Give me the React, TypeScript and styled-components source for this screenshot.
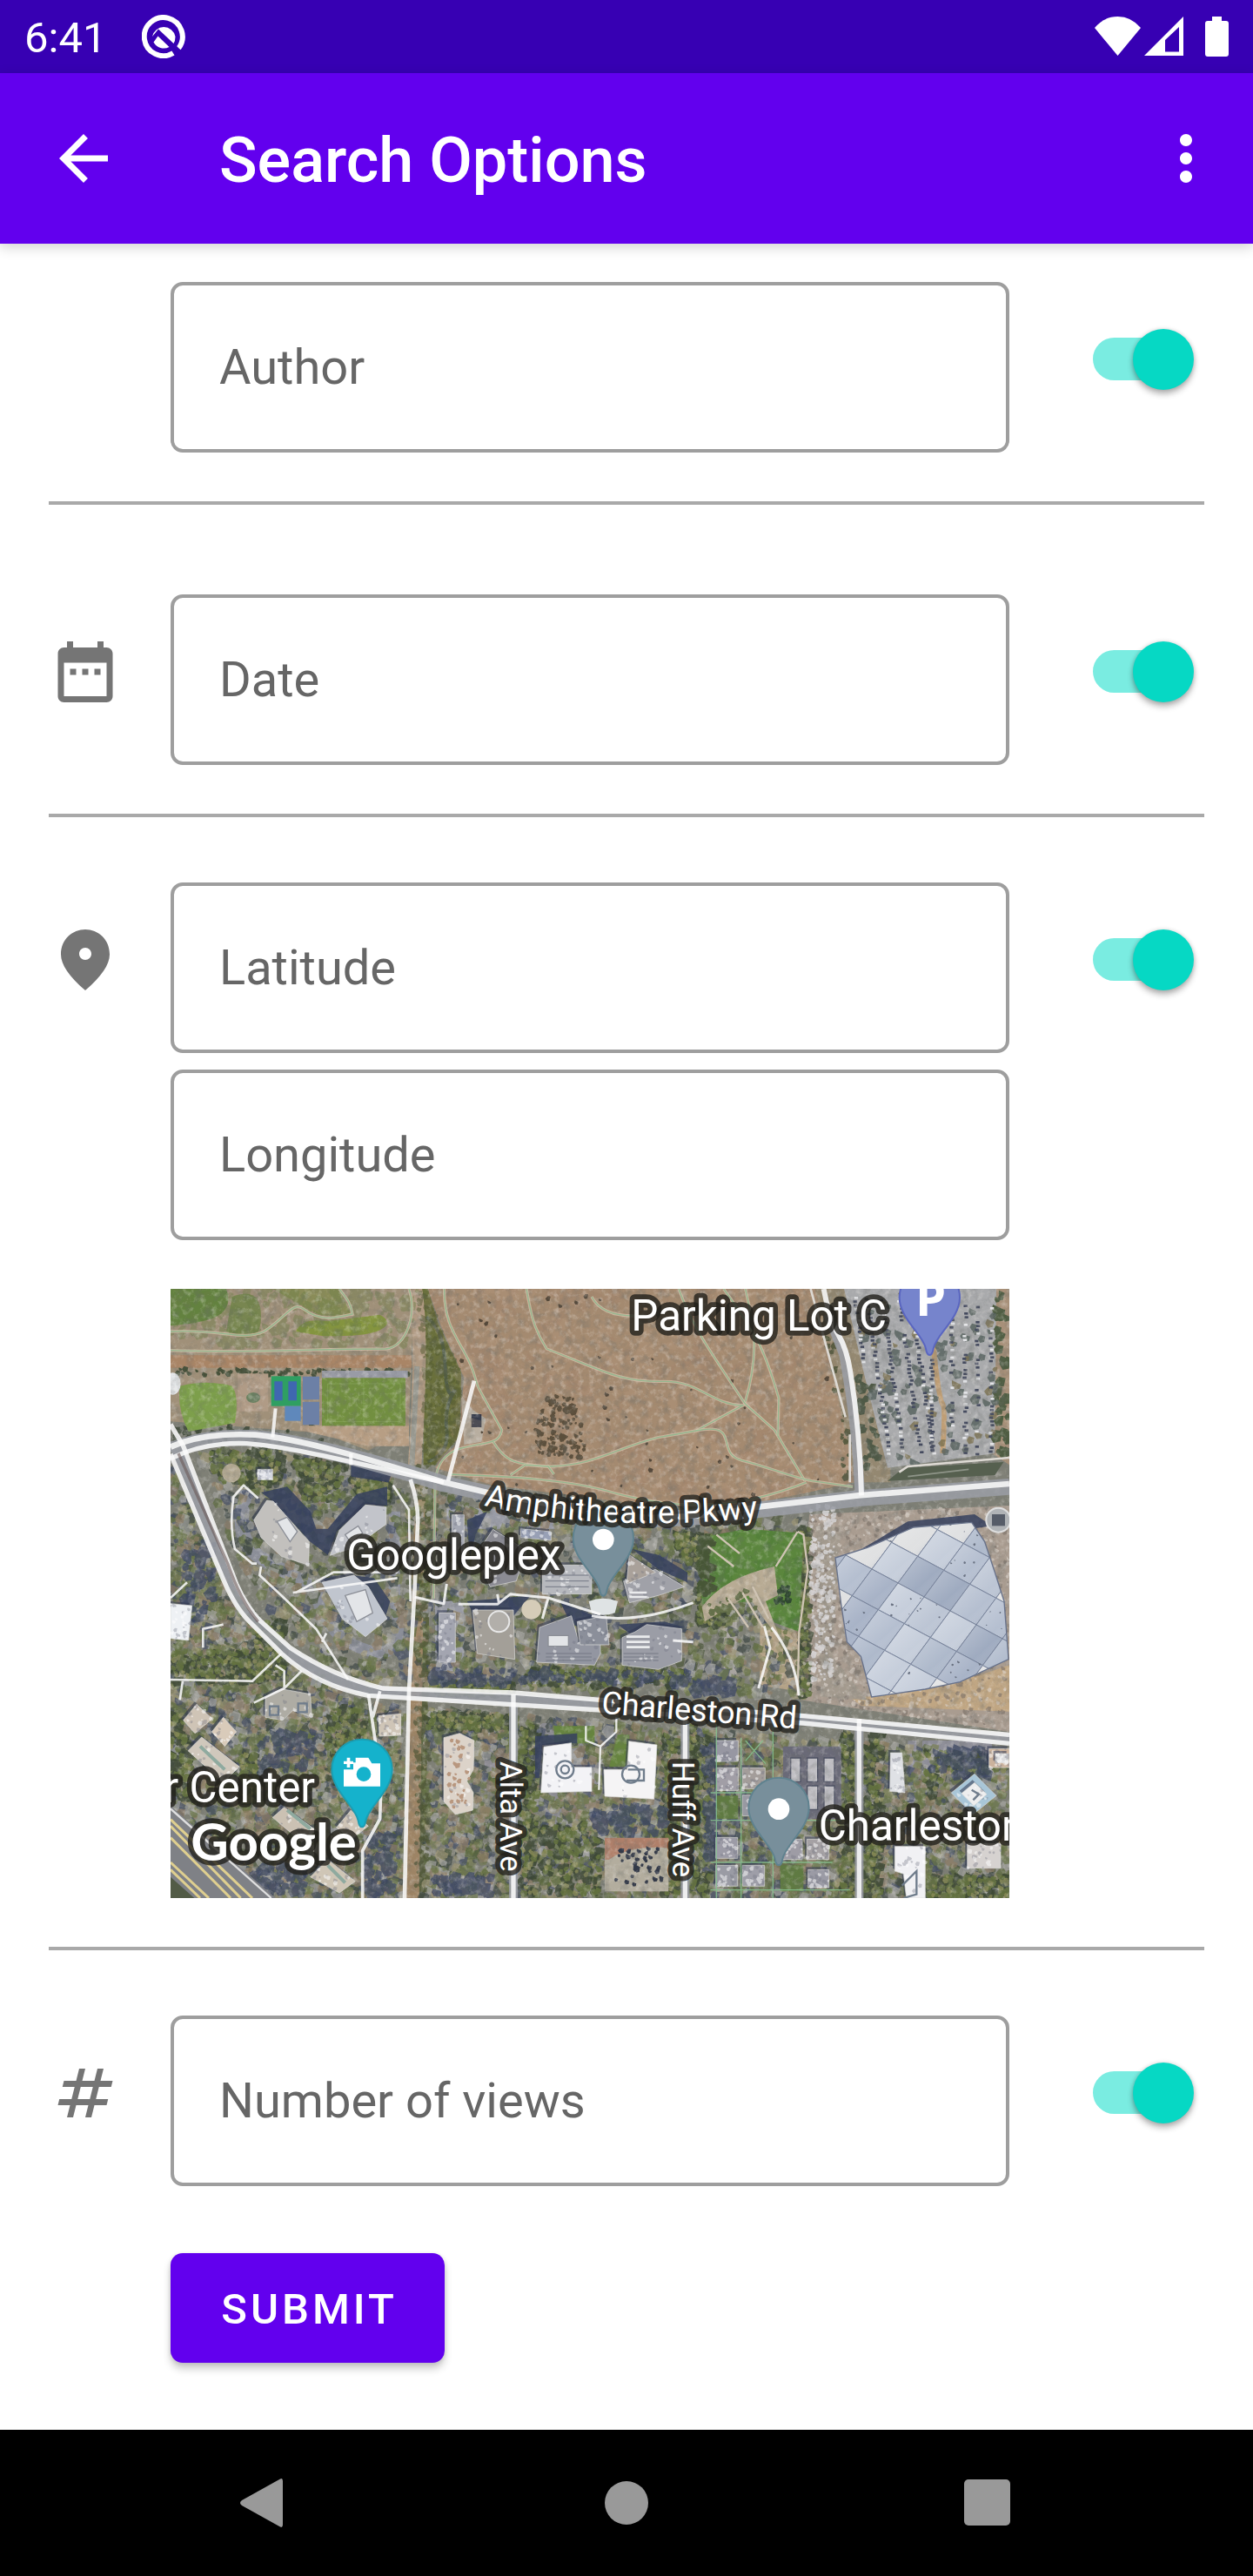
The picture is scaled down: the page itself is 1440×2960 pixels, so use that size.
import React, { useId } from 'react';
import styled, { createGlobalStyle } from 'styled-components';

const color = {
  primary: '#6200ee',
  primaryDark: '#3700b3',
  accent: '#06d8c4',
  track: '#7aece1',
  outline: '#9e9e9e',
  divider: '#a9a9a9',
  hint: '#666666',
  icon: '#757575',
  nav: '#999999',
};

const GlobalStyle = createGlobalStyle`
  *, *::before, *::after { box-sizing: border-box; }
  body { margin: 0; background: #fff; font-family: Roboto, "Liberation Sans", sans-serif; }
  svg { display: block; }
  button { font: inherit; border: 0; padding: 0; margin: 0; cursor: pointer; }
`;

/* ---------- Page chrome ---------- */

const Screen = styled.div`
  display: flex;
  flex-direction: column;
  min-height: 100vh;
`;

const StatusBar = styled.div`
  display: flex;
  align-items: center;
  justify-content: space-between;
  height: 84px;
  padding: 0 28px;
  background: ${color.primaryDark};
  color: #fff;
`;

const StatusGroup = styled.div<{ $gap: number }>`
  display: flex;
  align-items: center;
  gap: ${(p) => p.$gap}px;
`;

const Clock = styled.time`
  padding-top: 4px;
  font-size: 49px;
  line-height: 56px;
`;

const Signals = styled.div`
  display: flex;
  gap: 4px;
`;

const AppBar = styled.header`
  position: relative;
  z-index: 1;
  display: flex;
  align-items: center;
  height: 196px;
  padding: 0 35px 0 54px;
  background: ${color.primary};
  color: #fff;
  box-shadow: 0 4px 14px rgba(0, 0, 0, 0.18);
`;

const IconButton = styled.button`
  display: grid;
  place-items: center;
  width: 84px;
  height: 84px;
  background: transparent;
  color: inherit;
`;

const Title = styled.h1`
  flex: 1;
  margin: 0;
  padding: 6px 0 0 114px;
  font-size: 72px;
  line-height: 84px;
  font-weight: 500;
`;

const NavBar = styled.nav`
  display: grid;
  grid-template-columns: repeat(3, 414px);
  justify-content: center;
  place-items: center;
  height: 168px;
  background: #000;
  color: ${color.nav};
`;

/* ---------- Form ---------- */

const Form = styled.form`
  flex: 1;
  display: flex;
  flex-direction: column;
  padding: 25px 56px 77px;
`;

const Row = styled.div`
  display: grid;
  grid-template-columns: 140px minmax(0, 1fr) 224px;
  align-items: center;
`;

const RowIcon = styled.div`
  color: ${color.icon};
`;

const Divider = styled.hr<{ $after?: number }>`
  width: 100%;
  height: 4px;
  margin: 56px 0 ${(p) => p.$after ?? 56}px;
  border: 0;
  background: ${color.divider};
`;

const FieldBox = styled.div`
  display: grid;
  grid-column: 2;
  padding-top: 19px;
`;

const FieldInput = styled.input`
  grid-area: 1 / 1;
  width: 100%;
  height: 196px;
  padding: 0 52px;
  border: 4px solid ${color.outline};
  border-radius: 14px;
  background: transparent;
  color: #222;
  font: inherit;
  font-size: 56px;
  outline: none;
  &:focus { border-color: ${color.primary}; }
  &:not(:placeholder-shown) + label { visibility: hidden; }
`;

const FieldLabel = styled.label`
  grid-area: 1 / 1;
  align-self: center;
  justify-self: start;
  padding-left: 56px;
  color: ${color.hint};
  font-size: 56px;
  line-height: 64px;
  pointer-events: none;
`;

const Switch = styled.input`
  position: relative;
  appearance: none;
  justify-self: end;
  width: 105px;
  height: 49px;
  margin: 0 23px 0 0;
  border-radius: 25px;
  background: #b9b9b9;
  cursor: pointer;
  &::after {
    content: '';
    position: absolute;
    top: -10px;
    left: -11px;
    width: 70px;
    height: 70px;
    border-radius: 50%;
    background: #f1f1f1;
    box-shadow: 0 5px 7px rgba(0, 0, 0, 0.28), 0 0 5px rgba(0, 0, 0, 0.16);
  }
  &:checked { background: ${color.track}; }
  &:checked::after { left: 46px; background: ${color.accent}; }
`;

const MapFrame = styled.figure`
  grid-column: 2;
  height: 700px;
  margin: 56px 0 0;
  overflow: hidden;
  svg { width: 100%; height: 100%; }
`;

const Submit = styled.button`
  align-self: flex-start;
  width: 315px;
  height: 126px;
  margin: 77px 0 0 140px;
  padding: 4px 0 0 4px;
  border-radius: 14px;
  background: ${color.primary};
  color: #fff;
  font-size: 49px;
  line-height: 56px;
  font-weight: 500;
  letter-spacing: 4px;
  text-transform: uppercase;
  box-shadow: 0 7px 10px rgba(0, 0, 0, 0.2), 0 1px 5px rgba(0, 0, 0, 0.12);
`;

/* ---------- Icons ---------- */

const Glyph = ({ d }: { d: string }) => (
  <svg width="84" height="84" viewBox="0 0 24 24" fill="currentColor" aria-hidden="true">
    <path d={d} />
  </svg>
);

const ICONS = {
  back: 'M20 11H7.83l5.59-5.59L12 4l-8 8 8 8 1.41-1.41L7.83 13H20v-2z',
  more: 'M12 8c1.1 0 2-.9 2-2s-.9-2-2-2-2 .9-2 2 .9 2 2 2zm0 2c-1.1 0-2 .9-2 2s.9 2 2 2 2-.9 2-2-.9-2-2-2zm0 6c-1.1 0-2 .9-2 2s.9 2 2 2 2-.9 2-2-.9-2-2-2z',
  date: 'M9 11H7v2h2v-2zm4 0h-2v2h2v-2zm4 0h-2v2h2v-2zm2-7h-1V2h-2v2H8V2H6v2H5c-1.11 0-1.99.9-1.99 2L3 20c0 1.1.89 2 2 2h14c1.1 0 2-.9 2-2V6c0-1.1-.9-2-2-2zm0 16H5V9h14v11z',
  place: 'M12 2c-4.2 0-8 3.22-8 8.2 0 3.32 2.67 7.25 8 11.8 5.33-4.55 8-8.48 8-11.8C20 5.22 16.2 2 12 2zm0 10c-1.1 0-2-.9-2-2s.9-2 2-2 2 .9 2 2-.9 2-2 2z',
  number: 'M20.5 10L21 8h-4l1-4h-2l-1 4h-4l1-4h-2L9 8H5l-.5 2h4l-1 4h-4L3 16h4l-1 4h2l1-4h4l-1 4h2l1-4h4l.5-2h-4l1-4h4zm-7 4h-4l1-4h4l-1 4z',
};

const DebugIcon = () => (
  <svg width="50" height="50" viewBox="0 0 50 50" fill="none" aria-hidden="true">
    <path d="M42.200 38.500A22 22 0 1 0 36 44" stroke="#fff" strokeWidth="6" />
    <path d="M37.500 36L44 43" stroke={color.primaryDark} strokeWidth="4" />
    <path d="M12 25A13.500 13.500 0 0 1 38.500 25Q38.500 30 36.500 33L19 16.500L12 25z" fill="#fff" />
    <path d="M13.500 31.500L18.500 24.500L31.500 37A13.500 13.500 0 0 1 13.500 31.500z" fill="#fff" />
  </svg>
);

const WifiIcon = () => (
  <svg width="53" height="46" viewBox="0 0 53 46" fill="#fff" aria-hidden="true">
    <path d="M0 13Q11 0 26.500 0T53 13L26.500 45z" />
  </svg>
);

const CellIcon = () => (
  <svg width="45" height="46" viewBox="0 0 45 46" fill="#fff" fillRule="evenodd" aria-hidden="true">
    <path d="M0 45L45 0V45zM24 40.500H40V12L24 27z" />
  </svg>
);

const BatteryIcon = () => (
  <svg width="27" height="46" viewBox="0 0 27 46" fill="#fff" aria-hidden="true">
    <path d="M8 0H19V5H24Q27 5 27 8V43Q27 46 24 46H3Q0 46 0 43V8Q0 5 3 5H8z" />
  </svg>
);

/* ---------- Satellite map ---------- */

type Pt = [number, number];

const random = (seed: number) => () => {
  seed = (seed * 1664525 + 1013904223) % 4294967296;
  return seed / 4294967296;
};

const inside = ([x, y]: Pt, poly: Pt[]) => {
  let hit = false;
  for (let i = 0, j = poly.length - 1; i < poly.length; j = i++) {
    const [xi, yi] = poly[i];
    const [xj, yj] = poly[j];
    if (yi > y !== yj > y && x < ((xj - xi) * (y - yi)) / (yj - yi) + xi) hit = !hit;
  }
  return hit;
};

/** Irregular blots spread over a polygon: tree crowns, scrub, bare patches. */
const scatter = (seed: number, poly: Pt[], count: number, min: number, max: number) => {
  const next = random(seed);
  const xs = poly.map((p) => p[0]);
  const ys = poly.map((p) => p[1]);
  const x0 = Math.min(...xs);
  const y0 = Math.min(...ys);
  const w = Math.max(...xs) - x0;
  const h = Math.max(...ys) - y0;
  let d = '';
  for (let i = 0; i < count; i++) {
    const x = x0 + next() * w;
    const y = y0 + next() * h;
    const r = min + next() * (max - min);
    const k = next();
    if (!inside([x, y], poly)) continue;
    const n = (v: number) => Math.round(v);
    d += `M${n(x - r)} ${n(y)}L${n(x - r * k)} ${n(y - r)}L${n(x + r)} ${n(y - r * (1 - k))}L${n(x + r * 0.7)} ${n(y + r * 0.8)}L${n(x - r * 0.4)} ${n(y + r)}z`;
  }
  return d;
};

const pts = (p: Pt[]) => p.map((q) => q.join(',')).join(' ');
const rect = (x: number, y: number, w: number, h: number): Pt[] => [[x, y], [x + w, y], [x + w, y + h], [x, y + h]];

const MEADOW: Pt[] = [[18, 33], [870, 33], [850, 230], [840, 520], [700, 590], [540, 530], [18, 490]];
const FIELD: Pt[] = [[905, 33], [2240, 33], [2290, 220], [2350, 480], [2375, 700], [2190, 740], [1990, 780], [1600, 770], [1130, 710], [930, 650], [1010, 560], [1030, 340], [950, 160]];
const CREEK: Pt[] = [[868, 33], [905, 33], [940, 150], [1020, 320], [1015, 540], [930, 640], [890, 640], [890, 300]];
const CAMPUS: Pt[] = [[110, 600], [280, 570], [960, 720], [2200, 830], [2220, 1440], [700, 1400], [420, 1240], [280, 1020]];
const WEST: Pt[] = [[18, 640], [210, 1080], [420, 1320], [700, 1460], [820, 1480], [820, 2133], [18, 2133]];
const SOUTH: Pt[] = [[890, 1480], [2910, 1640], [2910, 2133], [890, 2133]];
const LOT: Pt[] = [[2340, 33], [2865, 33], [2860, 600], [2490, 650], [2410, 330]];
const SITE: Pt[] = [[2220, 810], [2910, 780], [2910, 1560], [2190, 1450]];

const PLANTING: { poly: Pt[]; density: number }[] = [
  { poly: CAMPUS, density: 380 },
  { poly: WEST, density: 620 },
  { poly: SOUTH, density: 520 },
];
const TREE_COLORS = ['#4b573a', '#7b8153', '#3d4744', '#9c9575', '#5d6b3e', '#454e66', '#a7a6a3', '#8f7d66', '#6a7648'];

/* Dense hedges and tree belts along streets and plots. */
const GROVES: Pt[][] = [
  [[140, 590], [400, 590], [420, 680], [330, 720], [180, 700]],
  [[440, 610], [620, 640], [590, 760], [480, 760]],
  [[640, 690], [770, 700], [770, 770], [680, 760]],
  rect(920, 1390, 280, 40),
  rect(1240, 1340, 560, 60),
  [[1750, 870], [1840, 880], [1850, 1000], [1780, 960]],
  [[1830, 1060], [1940, 1100], [1920, 1200], [1840, 1180]],
  rect(2190, 860, 30, 580),
  rect(905, 1500, 290, 50),
  rect(1220, 1540, 60, 590),
  rect(1720, 1560, 60, 570),
  rect(1810, 1540, 70, 590),
  rect(2335, 1560, 50, 570),
  rect(2410, 1560, 60, 570),
  [[2620, 1620], [2900, 1650], [2900, 1700], [2700, 1700], [2630, 1800]],
  rect(2630, 2060, 280, 70),
  rect(1300, 1880, 200, 240),
  rect(310, 1180, 100, 200),
  rect(30, 1280, 280, 110),
  rect(560, 1480, 130, 260),
  [[18, 1500], [60, 1500], [120, 1800], [18, 1780]],
  rect(260, 1640, 60, 160),
  [[210, 1080], [240, 1080], [420, 1290], [380, 1300]],
];

const DOME: Pt[] = [[2310, 960], [2420, 925], [2580, 855], [2780, 838], [2825, 905], [2860, 1010], [2892, 1110], [2907, 1310], [2740, 1388], [2620, 1413], [2435, 1440], [2398, 1300], [2350, 1250], [2330, 1120]];
const DOME_CELLS = (() => {
  const next = random(77);
  const shades = ['#9fabc0', '#aeb9cb', '#bcc5d4', '#a8b3c7', '#c6cedb', '#b5bfd0'];
  const cells: { p: Pt[]; fill: string; dots: boolean }[] = [];
  for (let i = -8; i < 9; i++) {
    for (let j = -8; j < 9; j++) {
      const x = 2616 + i * 90 - j * 68;
      const y = 1095 + i * 48 + j * 92;
      const edge = Math.abs(i) + Math.abs(j) > 3 && next() > 0.4;
      cells.push({
        p: [[x, y], [x + 90, y + 48], [x + 22, y + 140], [x - 68, y + 92]],
        fill: edge ? '#e0e1e2' : shades[Math.floor(next() * shades.length)],
        dots: next() > 0.6,
      });
    }
  }
  return cells;
})();

/* Parked cars: short dashes along the lanes of the car park. */
const CAR_LANES = [2368, 2410, 2460, 2520, 2562, 2632, 2702, 2748, 2790, 2838].flatMap((x, i) => {
  const next = random(900 + i);
  const out: { x: number; y: number; dark: boolean }[] = [];
  const fill = i < 6 ? 0.12 : 0.55;
  for (let y = 60 + i * 4; y < 600; y += 13) {
    const lean = i < 5 ? (y - 60) * 0.14 : 0;
    if (next() > fill && inside([x + lean, y], LOT)) out.push({ x: x + lean + next() * 8, y, dark: next() > 0.25 });
  }
  return out;
});

const BUILDINGS: { p: Pt[]; fill: string }[] = [
  { p: [[350, 762], [372, 765], [496, 905], [494, 985], [400, 955], [330, 890], [305, 830]], fill: '#c2c0bd' },
  { p: [[568, 952], [600, 865], [690, 778], [762, 785], [760, 845], [650, 925]], fill: '#c2c4ca' },
  { p: [[540, 1045], [650, 1020], [700, 1060], [765, 1170], [690, 1232], [610, 1170]], fill: '#c0c5ce' },
  { p: rect(318, 655, 52, 36), fill: '#d2d5de' },
  { p: [[18, 1118], [92, 1125], [80, 1245], [18, 1238]], fill: '#eef1f4' },
  { p: rect(988, 812, 42, 150), fill: '#a5a8b3' },
  { p: [[1070, 950], [1130, 862], [1245, 935], [1210, 1040], [1120, 1060]], fill: '#8b8b93' },
  { p: rect(944, 1150, 56, 170), fill: '#a3a5b0' },
  { p: [[1060, 1140], [1200, 1140], [1205, 1310], [1075, 1290]], fill: '#a39f98' },
  { p: [[1225, 860], [1330, 870], [1330, 900], [1225, 890]], fill: '#98a0b5' },
  { p: rect(1300, 985, 170, 100), fill: '#b7b9be' },
  { p: [[1290, 1200], [1400, 1160], [1425, 1250], [1500, 1255], [1500, 1290], [1480, 1330], [1280, 1320]], fill: '#9396a1' },
  { p: [[1420, 1180], [1520, 1160], [1530, 1260], [1430, 1260]], fill: '#8b8f9a' },
  { p: [[1575, 1235], [1620, 1215], [1660, 1190], [1780, 1205], [1780, 1315], [1700, 1345], [1575, 1330]], fill: '#9b9da6' },
  { p: [[1580, 1040], [1690, 1000], [1790, 1060], [1700, 1090], [1600, 1115]], fill: '#a0a1a8' },
  { p: [[1600, 950], [1690, 1010], [1590, 1050]], fill: '#a9a19a' },
  { p: [[345, 1440], [400, 1412], [500, 1430], [505, 1510], [440, 1485], [405, 1520], [345, 1510]], fill: '#aeaca4' },
  { p: [[62, 1520], [108, 1465], [162, 1515], [102, 1565]], fill: '#cfc4b6' },
  { p: [[160, 1560], [200, 1510], [245, 1560], [205, 1610]], fill: '#d9cbba' },
  { p: [[78, 1625], [125, 1578], [255, 1680], [200, 1735]], fill: '#d0c8bc' },
  { p: [[370, 1855], [410, 1820], [520, 1900], [470, 1940]], fill: '#cbc1b3' },
  { p: [[590, 1890], [640, 1830], [700, 1885], [640, 1930]], fill: '#cec4b6' },
  { p: [[500, 2060], [560, 2000], [655, 2075], [600, 2115]], fill: '#cfc6b6' },
  { p: [[735, 1505], [812, 1498], [812, 1572], [738, 1575]], fill: '#cfc5b7' },
  { p: [[960, 1580], [1015, 1565], [1065, 1590], [1062, 1690], [1040, 1730], [1062, 1770], [1060, 1830], [1000, 1845], [960, 1800]], fill: '#dcd3c9' },
  { p: [[1305, 1612], [1400, 1598], [1400, 1682], [1470, 1682], [1470, 1765], [1295, 1770]], fill: '#f3f3f6' },
  { p: [[1598, 1592], [1695, 1605], [1685, 1792], [1515, 1782], [1512, 1690], [1592, 1690]], fill: '#f5f4f5' },
  { p: rect(1900, 1590, 75, 72), fill: '#9797a2' },
  { p: rect(1900, 1684, 75, 78), fill: '#a19ea6' },
  { p: rect(1990, 1684, 78, 72), fill: '#a39d9a' },
  { p: rect(1990, 1778, 78, 72), fill: '#9899a2' },
  { p: rect(1898, 1924, 75, 72), fill: '#9c9ba6' },
  { p: rect(2120, 1930, 76, 70), fill: '#9e9ca5' },
  { p: rect(2212, 1930, 76, 70), fill: '#a5a1a4' },
  { p: rect(1898, 2020, 75, 72), fill: '#9a9ba4' },
  { p: rect(1990, 2020, 76, 72), fill: '#9e9ea8' },
  { p: rect(2216, 2035, 72, 62), fill: '#9b9ba5' },
  { p: [[2500, 1632], [2540, 1632], [2545, 1700], [2550, 1770], [2498, 1765]], fill: '#dfe1e5' },
  { p: [[2710, 1770], [2790, 1705], [2865, 1780], [2785, 1845]], fill: '#a9c6d8' },
  { p: [[2745, 1772], [2790, 1735], [2832, 1775], [2788, 1815]], fill: '#eeeeef' },
  { p: rect(2840, 1618, 70, 65), fill: '#cbb29c' },
  { p: rect(2862, 1635, 45, 32), fill: '#dedede' },
  { p: [[2515, 1955], [2620, 1955], [2620, 2133], [2555, 2133], [2545, 2050], [2515, 2040]], fill: '#f1f1f4' },
  { p: [[2765, 1945], [2880, 1945], [2880, 2030], [2765, 2030]], fill: '#d6d2d0' },
];

const WAREHOUSES: Pt[][] = [rect(2156, 1650, 34, 82), rect(2213, 1650, 36, 82), rect(2271, 1650, 36, 82), rect(2156, 1746, 34, 82), rect(2213, 1746, 36, 82), rect(2271, 1746, 36, 82)];

const SHADOWS: Pt[][] = [
  [[330, 735], [420, 715], [500, 800], [520, 860], [560, 860], [660, 740], [765, 715], [765, 780], [690, 775], [590, 870], [560, 950], [500, 905], [372, 765]],
  [[640, 1020], [720, 1030], [775, 1110], [760, 1160], [700, 1070]],
  [[640, 640], [780, 670], [770, 700], [640, 680]],
  [[1040, 830], [1110, 800], [1070, 880], [1050, 960]],
  [[1040, 1110], [1260, 1090], [1200, 1160], [1060, 1150]],
  [[1360, 1110], [1500, 1170], [1480, 1210], [1400, 1190]],
  [[1560, 1190], [1720, 1180], [1790, 1200], [1600, 1220]],
  [[1610, 930], [1700, 950], [1800, 1010], [1800, 1045], [1700, 1000]],
  [[2400, 930], [2560, 835], [2790, 810], [2850, 850], [2780, 860], [2600, 870]],
  [[1275, 1575], [1420, 1565], [1420, 1600], [1300, 1605], [1290, 1720], [1275, 1720]],
];

/* Tree shade on tarmac, broken into dabs. */
const SHADE: Pt[][] = [
  rect(920, 1350, 280, 45),
  rect(1230, 1350, 580, 45),
  rect(1820, 1385, 140, 40),
  rect(1480, 1815, 250, 100),
  rect(930, 2060, 200, 60),
  rect(690, 1900, 90, 220),
  rect(60, 900, 110, 300),
  rect(330, 1560, 190, 150),
  rect(300, 2020, 180, 100),
  rect(1860, 1600, 40, 400),
  rect(2640, 1620, 200, 90),
];

const TRAILS = [
  'M962 33C960 130 990 180 1030 250S1065 340 1080 375L1160 520C1150 570 1110 560 1020 582C960 600 935 640 930 700L925 1100',
  'M1130 560C1170 625 1200 640 1330 645C1480 640 1560 580 1700 545L1830 522L1990 435C1880 430 1840 350 1720 352C1560 355 1500 310 1315 240C1270 170 1260 120 1245 33',
  'M1470 60C1500 120 1580 130 1650 125',
  'M2000 33C2030 170 2050 250 1998 428L2100 520L2205 695',
  'M1770 33C1820 170 1880 250 1998 428',
  'M1925 33C2030 180 2060 220 2115 410L2112 540',
  'M1830 522C1990 490 1890 600 1990 625S2150 680 2230 695L2370 715',
  'M1190 675L1240 640L1320 645L1340 672M980 672C1200 680 1400 690 1560 740C1800 800 1980 790 2210 700',
  'M18 245C300 255 500 240 760 240C830 235 870 120 840 33',
  'M18 180C200 170 260 215 340 180C420 130 440 70 480 105C540 150 600 130 645 120C640 80 620 60 600 33',
];

const ROADS: { d: string; w: number }[] = [
  { d: 'M18 578C90 545 190 530 310 536C470 550 720 625 960 700L1110 735L1400 790C1600 835 1800 830 2040 785L2390 745L2910 705', w: 20 },
  { d: 'M18 618C90 582 180 562 280 566C460 580 720 650 960 700', w: 16 },
  { d: 'M18 602L200 1035Q240 1130 290 1180L400 1290Q520 1400 700 1435L1500 1485L2200 1530L2910 1600', w: 16 },
  { d: 'M18 500L62 575L245 1050Q280 1130 330 1180L430 1270Q580 1370 750 1410L1200 1425L1500 1450L2200 1505L2910 1570', w: 16 },
  { d: 'M845 690Q875 780 870 850L860 1060L840 1420L825 2133', w: 14 },
  { d: 'M1200 1430V2133', w: 16 },
  { d: 'M1792 1505V2133', w: 16 },
  { d: 'M2392 1515V2133', w: 16 },
  { d: 'M2270 33Q2290 140 2320 190T2362 320Q2395 520 2400 745', w: 18 },
  { d: 'M1065 350L975 695', w: 14 },
  { d: 'M380 445L370 545M640 600V640', w: 12 },
  { d: 'M700 1430L725 1600L745 1700L740 1860L680 1970L680 2133M740 1420L715 1510', w: 11 },
  { d: 'M18 1380L300 1385L400 1290M380 1330L410 1350V1410M470 1350L410 1410L305 1460M18 1098L75 1045M60 1385L50 1450M130 1270V1205L200 1190', w: 8 },
  { d: 'M320 755L270 710L235 750Q220 850 240 930L300 980H315M330 990L325 1020L400 1090L520 1205L630 1380M785 710L840 795L845 1110M450 1080L580 1010H800M440 1080L800 1030M555 1220L540 1250', w: 8 },
  { d: 'M860 1096L960 1118L970 1050M1010 1120H1145L1190 1085L1320 1098L1500 1155M1145 1085L1150 1115M1320 1098L1300 1170', w: 9 },
  { d: 'M1470 1160Q1620 1190 1820 1115M2065 1195L2085 1270L2045 1410M2090 1200Q2170 1300 2185 1435M1750 1245L1820 1250', w: 9 },
  { d: 'M1555 1510V1560L1500 1610L1450 1590V1540M1500 1610L1495 1760', w: 7 },
];

const LOT_EDGE = 'M2225 33L2345 475M2360 535V700M2530 665L2560 645L2910 615';

const PIN = 'M0 198C-7 198 -11 190 -13 176C-22 128 -104 72 -104 0A104 104 0 1 1 104 0C104 72 22 128 13 176C11 190 7 198 0 198z';

const MapText = styled.text<{ $size: number }>`
  font-family: Roboto, "Liberation Sans", sans-serif;
  font-size: ${(p) => p.$size}px;
  fill: #fff;
  stroke: rgba(34, 33, 28, 0.8);
  stroke-width: 34px;
  stroke-linejoin: round;
  paint-order: stroke;
`;

const LogoText = styled(MapText)`
  font-family: Lato, "Open Sans", sans-serif;
  font-weight: 700;
`;

const PinLetter = styled.text`
  font-family: "Open Sans", Roboto, sans-serif;
  font-size: 168px;
  font-weight: 700;
  fill: #fff;
`;

const Pin = ({ x, y, fill, edge, children }: { x: number; y: number; fill: string; edge: string; children?: React.ReactNode }) => (
  <g transform={`translate(${x} ${y})`}>
    <path d={PIN} fill={fill} stroke={edge} strokeWidth="6" />
    {children}
  </g>
);

const SatelliteMap = () => (
  <svg viewBox="18 33 2892 2100" preserveAspectRatio="xMidYMid slice" role="img" aria-label="Satellite map around Googleplex">
    <defs>
      <clipPath id="dome"><polygon points={pts(DOME)} /></clipPath>
      <linearGradient id="tent" x1="0" y1="0" x2="1" y2="1">
        <stop offset="0" stopColor="#fff" stopOpacity="0.3" />
        <stop offset="0.6" stopColor="#fff" stopOpacity="0" />
        <stop offset="1" stopColor="#33405f" stopOpacity="0.35" />
      </linearGradient>
      <path id="amphitheatre" d="M1098 780Q1520 880 2120 815" />
      <filter id="ground" x="0" y="0" width="100%" height="100%">
        <feTurbulence type="fractalNoise" baseFrequency="0.03" numOctaves="5" seed="4" />
        <feColorMatrix values="0 0 0 0 0.14  0 0 0 0 0.15  0 0 0 0 0.14  2.2 0 0 0 -1" />
      </filter>
      <filter id="glints" x="0" y="0" width="100%" height="100%">
        <feTurbulence type="fractalNoise" baseFrequency="0.05" numOctaves="4" seed="11" />
        <feColorMatrix values="0 0 0 0 0.92  0 0 0 0 0.89  0 0 0 0 0.86  0 2 0 0 -0.98" />
      </filter>
    </defs>

    <rect x="18" y="33" width="2892" height="2100" fill="#7f8076" />

    {/* Land cover */}
    <polygon points={pts(MEADOW)} fill="#a09079" />
    <path d="M18 33H210Q230 90 190 120T18 160z" fill="#63823f" />
    <path d="M230 60Q330 20 330 130T210 180z" fill="#788650" />
    <path d="M370 33H600L640 120Q560 150 470 90z" fill="#8a8c58" />
    <path d="M450 180Q470 130 560 145L740 122Q790 150 740 175T540 195z" fill="#84943f" />
    <path d="M18 262H850V305H18z" fill="#a98566" />
    <polygon points={pts(FIELD)} fill="#a78b72" />
    <polygon points={pts(CREEK)} fill="#6a703c" />
    <path d="M900 130Q960 170 965 300T1000 380Q960 440 970 520T905 630" fill="none" stroke="#55604c" strokeWidth="12" />
    <path d="M862 33Q890 180 860 640" fill="none" stroke="#b09a83" strokeWidth="46" />
    <path d="M868 300L850 640" fill="none" stroke="#98988f" strokeWidth="18" />
    <polygon points={pts([[2240, 33], [2350, 33], [2500, 640], [2500, 700], [2380, 700]])} fill="#948871" />
    <polygon points={pts([[2850, 33], [2910, 33], [2910, 640], [2850, 600]])} fill="#a79079" />
    <path d="M1020 400L1060 450L1105 480L1090 560L1030 570z" fill="#b9b3a8" />
    <path d="M1055 465H1090V510H1055z" fill="#343a4a" />
    <polygon points={pts(LOT)} fill="#a9aaac" />
    <polygon points={pts(SITE)} fill="#a99c90" />
    <path d="M2360 1440Q2600 1440 2910 1330V1490L2400 1470z" fill="#c0a683" />
    <path d="M2240 860L2330 850L2300 1300L2420 1450L2260 1440z" fill="#a39a8e" />
    <path d="M2050 1190L2200 1225L2180 1420L2050 1400z" fill="#b5a388" />
    <path d="M860 760H910L890 2133H820z" fill="#9d8465" />
    <path d="M905 760L885 2133" stroke="#5b6140" strokeWidth="20" />

    {/* Pavement */}
    <path d="M280 730Q230 900 330 960T560 1090" fill="none" stroke="#8b8e98" strokeWidth="48" />
    <path d="M520 1090Q560 1240 700 1280T790 1100V800" fill="none" stroke="#8b8e98" strokeWidth="40" />
    <path d="M930 1110H1030V1350H930zM970 790H1360V860H970z" fill="#9a9ca6" />
    <path d="M1925 1170H1970V1370H1925z" fill="#a8a49f" />
    <path d="M330 1560H510V1700H330zM690 1900H780V2133H690z" fill="#8b8679" />
    <path d="M940 1510H1040V1560H940zM1100 1510H1145V1760H1100zM940 2060H1130V2133H940z" fill="#96939b" />
    <path d="M1250 1570L1300 1530H1500V2000H1310V1600L1250 1600z" fill="#8b8b90" />
    <path d="M1250 1350H1800V1395H1250z" fill="#9a9da9" />
    <path d="M2610 1590H2850V1700H2610zM2560 1590H2590V1850H2560z" fill="#8f8f99" />

    {PLANTING.map((zone, z) =>
      TREE_COLORS.map((fill, i) => (
        <path key={`${z}-${i}`} d={scatter(100 * (z + 1) + i * 7, zone.poly, zone.density, 7, 22)} fill={fill} opacity="0.7" />
      )),
    )}
    {GROVES.map((g, i) => (
      <g key={i}>
        <path d={scatter(500 + i, g, 70, 9, 20)} fill="#3b4733" opacity="0.85" />
        <path d={scatter(600 + i, g, 55, 7, 15)} fill="#64723f" opacity="0.9" />
        <path d={scatter(700 + i, g, 25, 5, 11)} fill="#8a8b58" opacity="0.8" />
      </g>
    ))}
    {SHADE.map((s, i) => <path key={i} d={scatter(800 + i, s, 45, 9, 24)} fill="#3c4763" opacity="0.75" />)}
    <path d={scatter(21, FIELD, 700, 12, 50)} fill="#b59b80" opacity="0.18" />
    <path d={scatter(22, FIELD, 600, 12, 46)} fill="#8d745c" opacity="0.16" />
    <path d={scatter(23, FIELD, 60, 4, 9)} fill="#54483a" />
    <path d={scatter(24, [[1320, 400], [1400, 400], [1450, 540], [1440, 620], [1290, 600], [1270, 520]], 210, 4, 10)} fill="#5c4f3c" />
    <path d={scatter(31, MEADOW.slice(0, 3).concat([[18, 230]]), 200, 6, 22)} fill="#6a7d45" opacity="0.4" />
    <path d={scatter(33, CREEK, 400, 4, 12)} fill="#4f572f" opacity="0.5" />
    <path d={scatter(35, rect(862, 640, 50, 1480), 200, 5, 12)} fill="#4f5535" opacity="0.7" />
    <path d={scatter(36, rect(30, 500, 800, 60), 50, 7, 14)} fill="#414b3a" />
    <path d={scatter(37, SITE, 500, 3, 10)} fill="#7a7068" opacity="0.6" />
    <path d={scatter(38, SITE, 400, 3, 9)} fill="#dad2c9" opacity="0.6" />
    <path d={scatter(39, rect(2225, 780, 80, 600), 170, 4, 11)} fill="#dddcde" opacity="0.8" />
    <path d={scatter(43, [[2240, 100], [2280, 100], [2370, 480], [2360, 690], [2330, 690], [2330, 480]], 130, 5, 13)} fill="#595b40" />
    <path d={scatter(44, [[2370, 330], [2430, 330], [2470, 640], [2420, 690]], 40, 10, 20)} fill="#4f5946" />
    <path d={scatter(45, rect(2860, 40, 50, 560), 35, 9, 22)} fill="#4f5d42" />
    <path d={scatter(46, rect(18, 310, 820, 20), 90, 5, 11)} fill="#465039" />

    {/* Amphitheatre park */}
    <path d="M1850 890L2000 860L2200 875L2185 1215L2090 1180L2040 1110L1850 1120z" fill="#54803a" />
    <path d={scatter(61, [[1860, 900], [2190, 880], [2180, 1200], [2090, 1170]], 160, 8, 30)} fill="#6a9145" opacity="0.35" />
    <path d="M1850 1130Q1920 1030 2100 990L2112 1090L2070 1110L2120 1240L2070 1180L2010 1090L1860 1180z" fill="#b8ab94" />
    <path d={scatter(62, [[1850, 1130], [2010, 1050], [2060, 1170], [1950, 1230]], 90, 5, 13)} fill="#65704a" />
    <path d={scatter(63, [[2100, 1080], [2150, 1060], [2150, 1110], [2110, 1120]], 25, 8, 15)} fill="#2f4730" />
    <path d={scatter(64, [[1840, 890], [1890, 890], [1890, 1090], [1840, 1090]], 55, 8, 18)} fill="#475636" />

    {/* Lawns, storage yard, south car park */}
    <path d="M1340 1540H1480V1600H1340zM1560 1570H1600V1680H1530z" fill="#66843f" />
    <path d="M1900 1780H1975V1860H1900zM2120 2020H2200V2110H2120z" fill="#5f7a42" />
    <path d="M2130 1610H2330V1860H2130z" fill="#6a6a78" />
    {WAREHOUSES.map((w, i) => <polygon key={i} points={pts(w)} fill="#bfbec3" stroke="#4e5263" strokeWidth="4" />)}
    <rect x="1515" y="1930" width="220" height="180" fill="#b3ad9e" />
    <path d="M1515 1925H1735V1960Q1600 1950 1530 2000H1515z" fill="#b0806a" />
    <path d={scatter(51, rect(1550, 1960, 160, 130), 34, 5, 10)} fill="#333948" />

    {/* Sports grounds */}
    <path d="M50 368Q140 345 230 368Q255 400 240 495L80 525Q40 450 50 368z" fill="#7d9f4b" />
    <rect x="250" y="325" width="105" height="130" fill="#b09b86" />
    <ellipse cx="303" cy="408" rx="24" ry="18" fill="#6b8160" />
    <rect x="540" y="315" width="296" height="25" fill="#999ba5" />
    <path d="M465 505H840V575H700L465 520z" fill="#b79e84" />
    <rect x="540" y="340" width="288" height="165" fill="#728f40" />
    <path d="M684 340V505M560 360H810V490H560z" fill="none" stroke="#8aa65b" strokeWidth="2" />
    <circle cx="684" cy="422" r="26" fill="none" stroke="#8aa65b" strokeWidth="2" />
    <ellipse cx="25" cy="360" rx="28" ry="38" fill="#e6e8ea" />
    <circle cx="228" cy="668" r="32" fill="#b2a892" />

    <path d="M2655 60Q2640 180 2655 300T2680 430T2680 600" fill="none" stroke="#bf9e75" strokeWidth="18" />
    <path d={scatter(41, LOT, 90, 9, 20)} fill="#54605c" opacity="0.8" />
    <path d={scatter(42, LOT, 40, 8, 16)} fill="#7a7150" opacity="0.8" />
    {CAR_LANES.map((c, i) => (
      <rect key={i} x={c.x} y={c.y} width="13" height="8" fill={c.dark ? '#444a5e' : '#e2e3e6'} />
    ))}

    <rect x="18" y="33" width="2892" height="2100" filter="url(#ground)" opacity="0.42" />
    <rect x="18" y="33" width="2892" height="2100" filter="url(#glints)" opacity="0.4" />

    <rect x="365" y="334" width="102" height="103" fill="#2f9f62" />
    <path d="M376 352H404V418H376zM424 352H453V418H424z" fill="#3f67b0" />
    <path d="M474 335H531V415H474zM474 422H531V502H474z" fill="#6c80a6" />
    <path d="M412 437H467V488H412z" fill="#5f88bb" />
    <polygon points={pts([[2490, 695], [2545, 650], [2890, 630], [2860, 675]])} fill="#56604f" />
    <path d="M2560 680L2770 655" stroke="#8e9488" strokeWidth="5" />

    {/* Buildings */}
    {SHADOWS.map((s, i) => <polygon key={i} points={pts(s)} fill="#36415e" opacity="0.85" />)}
    {BUILDINGS.map((b, i) => (
      <g key={i}>
        <polygon points={pts(b.p)} fill="#2f3750" opacity="0.55" transform="translate(-7 -9)" />
        <polygon points={pts(b.p)} fill={b.fill} stroke="#dcdcda" strokeWidth="2" />
        <path d={scatter(300 + i, b.p, 14, 3, 8)} fill="#6f7480" opacity="0.35" />
        <path d={scatter(400 + i, b.p, 14, 3, 9)} fill="#fff" opacity="0.5" />
      </g>
    ))}
    <path d="M385 835L420 820L455 870L430 905zM620 880L665 850L680 875L640 910zM620 1090L690 1070L715 1150L660 1180zM1320 1228H1390V1265H1320z" fill="#e3e5e8" stroke="#8c8f97" strokeWidth="4" />
    <path d="M1312 1290H1470M1312 1302H1470M1312 1314H1470M1580 1290H1700M1580 1302H1700M1580 1314H1700M1310 1020H1460M1310 1040H1460M1310 1060H1460" stroke="#747884" strokeWidth="3" />
    <path d="M1590 1232H1670M1590 1250H1670M1590 1268H1670M1600 1080H1660M1600 1095H1660" stroke="#eaebed" strokeWidth="8" />
    <path d="M1460 1110Q1510 1090 1560 1110L1550 1150Q1510 1165 1470 1150z" fill="#dfe3e4" />
    <circle cx="1150" cy="1180" r="36" fill="#b2afaa" stroke="#e8e8e8" strokeWidth="6" />
    <circle cx="1262" cy="1138" r="34" fill="#d5ccb8" />
    <g fill="none" stroke="#6f7c8b" strokeWidth="7">
      <circle cx="1378" cy="1690" r="30" />
      <circle cx="1378" cy="1690" r="14" />
      <circle cx="1605" cy="1706" r="30" />
      <path d="M1595 1690H1650V1728H1590M2540 2090L2590 2040V2120L2545 2133M2780 1760L2805 1775L2785 1795" />
      <path d="M360 1472H390V1502H360zM458 1462H488V1492H458z" />
    </g>
    <path d="M120 1610L205 1690M420 1830L500 1895M560 2020L620 2080" stroke="#8faa9f" strokeWidth="12" />
    <path d={scatter(52, rect(975, 1590, 75, 230), 30, 4, 9)} fill="#b8977f" />

    {/* Tent roof */}
    <polygon points={pts(DOME)} fill="#b3bccb" />
    <g clipPath="url(#dome)">
      {DOME_CELLS.map((c, i) => (
        <g key={i}>
          <polygon points={pts(c.p)} fill={c.fill} />
          <polygon points={pts(c.p)} fill="url(#tent)" stroke="#78839a" strokeWidth="3" />
          {c.dots && <path d={scatter(i, c.p, 12, 2, 5)} fill="#6a7282" />}
        </g>
      ))}
    </g>
    <polygon points={pts(DOME)} fill="none" stroke="#68728a" strokeWidth="4" />
    <circle cx="2872" cy="830" r="42" fill="#b0b3b6" stroke="#dedede" strokeWidth="6" />
    <path d="M2850 810H2895V850H2850z" fill="#565c68" />

    {/* Trails and roads */}
    {TRAILS.map((d) => (
      <g key={d} fill="none">
        <path d={d} stroke="#d6c2ab" strokeWidth="10" opacity="0.75" />
        <path d={d} stroke="#7fb889" strokeWidth="4" opacity="0.7" />
      </g>
    ))}
    <path d="M1900 880L1980 945M1870 920L1960 990M1940 1100L2010 1200M1990 1080L2060 1200M2025 1060L2080 1170M2180 870L2200 880L2215 1000L2185 1215L2180 1435M2180 870L2105 990" fill="none" stroke="#cfc4b4" strokeWidth="7" />
    <path d="M1900 1510V2133M1985 1580V2133M2095 1540V2133M1880 1865H2330M1880 1770H2070M1880 2010H2300M1880 2105H2360M2000 1590L2070 1670M2060 1590L2000 1660" stroke="#86c191" strokeWidth="4" opacity="0.85" />
    <g fill="none" stroke="#9b9ea6" strokeWidth="56" opacity="0.85">
      <path d="M18 590C90 560 190 540 310 548C470 560 720 630 960 705L1400 800C1600 840 1800 830 2040 795L2390 755L2910 715" />
      <path d="M30 560L220 1035Q260 1130 310 1180L415 1280Q550 1385 725 1422L1500 1468L2200 1518L2910 1585" strokeWidth="40" />
      <path d="M2285 120L2340 260Q2385 500 2395 745" strokeWidth="34" />
      <path d="M1200 1440V2133M1792 1520V2133M2392 1530V2133" strokeWidth="30" />
    </g>
    {ROADS.map((r) => <path key={r.d} d={r.d} fill="none" stroke="#fcfcfc" strokeWidth={r.w} strokeLinejoin="round" opacity="0.86" />)}
    <path d={LOT_EDGE} fill="none" stroke="#ddd9d3" strokeWidth="8" />
    <path d="M45 600L215 980Q260 1110 320 1180" fill="none" stroke="#6b5a58" strokeWidth="10" opacity="0.6" />

    {/* Freeway */}
    <path d="M18 1815L380 2133H18z" fill="#7f8186" />
    <g fill="none" stroke="#dfcf8f" strokeWidth="9">
      <path d="M18 1862L300 2133M18 1885L260 2133M18 1925L225 2133M18 2010L150 2133M18 2035L120 2133" />
    </g>
    <path d="M18 1825L365 2133" stroke="#e0e0e0" strokeWidth="7" />
    <path d="M18 2060L100 2133H18z" fill="#525b46" />

    {/* Pins and captions */}
    <Pin x={2635} y={63} fill="#7684cc" edge="#5a66c0">
      <PinLetter x="-49" y="64">P</PinLetter>
    </Pin>
    <Pin x={1510} y={893} fill="#788f9b" edge="#5f828f"><circle cy="4" r="37" fill="#fff" /></Pin>
    <Pin x={2115} y={1822} fill="#788f9b" edge="#5f828f"><circle cy="4" r="37" fill="#fff" /></Pin>
    <Pin x={678} y={1690} fill="#15b2cc" edge="#1c9db2">
      <path d="M-22 -41H22L34 -21H63V58H-63V0H-30V-24H-22z" fill="#fff" />
      <path d="M-52 -41H-41V-29H-30V-19H-41V-7H-52V-19H-63V-29H-52z" fill="#fff" />
      <circle cx="6" cy="16" r="25" fill="#15b2cc" />
    </Pin>
    <MapText $size={148} x="1606" y="178">Parking Lot C</MapText>
    <MapText $size={148} x="625" y="1003">Googleplex</MapText>
    <MapText $size={148} x="2252" y="1935">Charleston</MapText>
    <MapText $size={148} x="516" y="1802" textAnchor="end">r Center</MapText>
    <MapText $size={110}><textPath href="#amphitheatre">Amphitheatre Pkwy</textPath></MapText>
    <MapText $size={108} transform="translate(1502 1496) rotate(4.500)">Charleston Rd</MapText>
    <MapText $size={104} transform="translate(1156 1662) rotate(90)">Alta Ave</MapText>
    <MapText $size={104} transform="translate(1750 1662) rotate(90)">Huff Ave</MapText>
    <LogoText $size={180} x="88" y="2004">Google</LogoText>
  </svg>
);

/* ---------- Screen ---------- */

const Field = ({ label }: { label: string }) => {
  const id = useId();
  return (
    <FieldBox>
      <FieldInput id={id} type="text" placeholder=" " />
      <FieldLabel htmlFor={id}>{label}</FieldLabel>
    </FieldBox>
  );
};

const OptionRow = ({ label, icon }: { label: string; icon?: string }) => (
  <Row>
    <RowIcon>{icon && <Glyph d={icon} />}</RowIcon>
    <Field label={label} />
    <Switch type="checkbox" role="switch" defaultChecked aria-label={`Use ${label}`} />
  </Row>
);

export default function App() {
  return (
    <Screen>
      <GlobalStyle />
      <StatusBar>
        <StatusGroup $gap={41}>
          <Clock>6:41</Clock>
          <DebugIcon />
        </StatusGroup>
        <StatusGroup $gap={25}>
          <Signals>
            <WifiIcon />
            <CellIcon />
          </Signals>
          <BatteryIcon />
        </StatusGroup>
      </StatusBar>
      <AppBar>
        <IconButton type="button" aria-label="Back"><Glyph d={ICONS.back} /></IconButton>
        <Title>Search Options</Title>
        <IconButton type="button" aria-label="More options"><Glyph d={ICONS.more} /></IconButton>
      </AppBar>
      <Form onSubmit={(e) => e.preventDefault()}>
        <OptionRow label="Author" />
        <Divider $after={84} />
        <OptionRow label="Date" icon={ICONS.date} />
        <Divider />
        <OptionRow label="Latitude" icon={ICONS.place} />
        <Row>
          <Field label="Longitude" />
          <MapFrame><SatelliteMap /></MapFrame>
        </Row>
        <Divider />
        <OptionRow label="Number of views" icon={ICONS.number} />
        <Submit type="submit">Submit</Submit>
      </Form>
      <NavBar>
        <IconButton type="button" aria-label="Back">
          <svg width="84" height="84" viewBox="0 0 84 84" fill="currentColor" aria-hidden="true">
            <path d="M58 14.500Q61 13 61 17V67Q61 71 58 69.500L14 45Q10 42 14 39z" />
          </svg>
        </IconButton>
        <IconButton type="button" aria-label="Home">
          <svg width="84" height="84" viewBox="0 0 84 84" fill="currentColor" aria-hidden="true">
            <circle cx="42" cy="42" r="25" />
          </svg>
        </IconButton>
        <IconButton type="button" aria-label="Recent apps">
          <svg width="84" height="84" viewBox="0 0 84 84" fill="currentColor" aria-hidden="true">
            <rect x="16" y="15" width="53" height="53" rx="5" />
          </svg>
        </IconButton>
      </NavBar>
    </Screen>
  );
}
